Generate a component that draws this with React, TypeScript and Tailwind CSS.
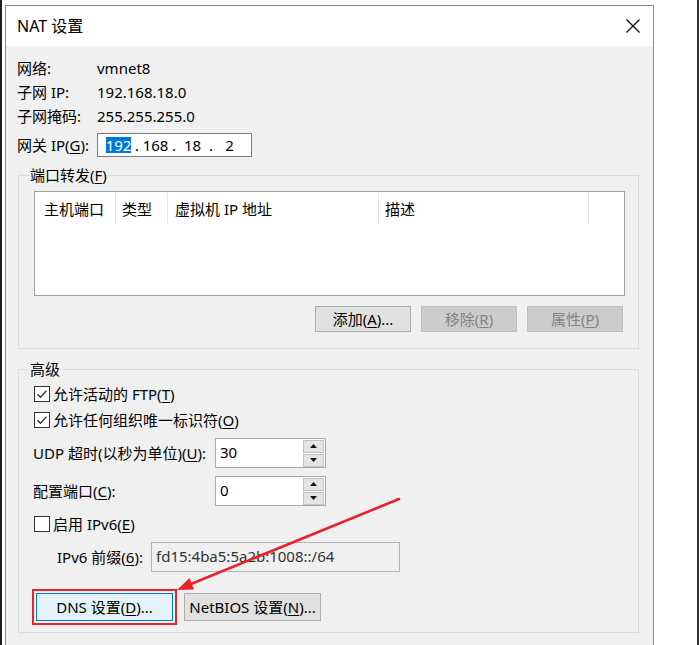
import React from "react";

const Mn = ({ c }: { c: string }) => (
  <>
    (<u className="underline-offset-2">{c}</u>)
  </>
);

function Check({ checked }: { checked: boolean }) {
  return (
    <span className="w-[16px] h-[16px] border border-[#333333] bg-white flex items-center justify-center shrink-0">
      {checked && (
        <svg width="12" height="12" viewBox="0 0 12 12">
          <path d="M1.5 6.2 L4.5 9.2 L10.5 2.6" fill="none" stroke="#333333" strokeWidth="1.4" />
        </svg>
      )}
    </span>
  );
}

function Spinner({ value }: { value: string }) {
  return (
    <div className="w-[111px] h-[30px] border border-[#a9a9a9] bg-white flex items-center">
      <span className="flex-1 pl-[4px] pb-[3px]">{value}</span>
      <div className="flex flex-col gap-[1px] mr-[1px]">
        <div className="w-[21px] h-[13px] bg-[#e4e4e4] border border-[#c4c4c4] flex items-center justify-center">
          <svg width="7" height="4" viewBox="0 0 7 4">
            <path d="M0 4 L3.5 0 L7 4 Z" fill="#111" />
          </svg>
        </div>
        <div className="w-[21px] h-[13px] bg-[#e4e4e4] border border-[#c4c4c4] flex items-center justify-center">
          <svg width="7" height="4" viewBox="0 0 7 4">
            <path d="M0 0 L7 0 L3.5 4 Z" fill="#111" />
          </svg>
        </div>
      </div>
    </div>
  );
}

export default function App() {
  return (
    <div className="relative w-[699px] h-[645px] bg-white overflow-hidden flex text-[15px] text-black font-['Noto_Sans','Noto_Sans_CJK_SC',sans-serif]">
      <div className="w-[2px] h-full bg-[#1e1e1e]" />
      <div className="w-[3px]" />

      {/* dialog */}
      <div className="mt-[5px] w-[649px] h-[700px] border border-[#8a8a8a] flex flex-col">
        <div className="h-[40px] bg-white flex items-center justify-between pl-[11px] pr-[13px]">
          <span className="text-[16px]">NAT 设置</span>
          <svg width="14" height="14" viewBox="0 0 14 14">
            <path d="M0.5 0.5 L13.5 13.5 M13.5 0.5 L0.5 13.5" stroke="#111" strokeWidth="1.3" />
          </svg>
        </div>

        <div className="flex-1 bg-[#f0f0f0] pl-[11px] pt-[10px] leading-[20px]">
          <div className="flex h-[24px] items-center">
            <span className="w-[80px]">网络:</span>
            <span>vmnet8</span>
          </div>
          <div className="flex h-[24px] items-center">
            <span className="w-[80px]">子网 IP:</span>
            <span>192.168.18.0</span>
          </div>
          <div className="flex h-[24px] items-center">
            <span className="w-[80px]">子网掩码:</span>
            <span>255.255.255.0</span>
          </div>
          <div className="flex h-[24px] items-center mt-[5px]">
            <span className="w-[80px]">
              网关 IP<Mn c="G" />:
            </span>
            <div className="w-[155px] h-[24px] border border-[#7a7a7a] bg-white flex items-center pl-[4px]">
              <span className="w-[33px] text-center">
                <span className="bg-[#0078d7] text-white leading-[16px] inline-block">192</span>
              </span>
              <span className="w-[4px] text-center">.</span>
              <span className="w-[33px] text-center">168</span>
              <span className="w-[4px] text-center">.</span>
              <span className="w-[33px] text-center">18</span>
              <span className="w-[4px] text-center">.</span>
              <span className="w-[33px] text-center">2</span>
            </div>
          </div>

          {/* port forwarding */}
          <fieldset className="ml-[1px] mt-[8px] w-[621px] border border-[#dcdcdc] pb-[16px]">
            <legend className="ml-[10px] px-[1px] leading-[20px]">
              端口转发<Mn c="F" />
            </legend>
            <div className="ml-[15px] mt-[6px] w-[591px] h-[105px] border border-[#a0a0a0] bg-white">
              <div className="flex h-[32px] items-center">
                <div className="w-[81px] h-[31px] border-r border-[#e5e5e5] pl-[9px] pt-[6px]">主机端口</div>
                <div className="w-[52px] h-[31px] border-r border-[#e5e5e5] pl-[6px] pt-[6px]">类型</div>
                <div className="w-[211px] h-[31px] border-r border-[#e5e5e5] pl-[7px] pt-[6px]">虚拟机 IP 地址</div>
                <div className="w-[210px] h-[31px] border-r border-[#e5e5e5] pl-[6px] pt-[6px]">描述</div>
              </div>
            </div>
            <div className="ml-[15px] w-[591px] mt-[10px] flex justify-end gap-[10px] pr-[2px]">
              <div className="w-[96px] h-[26px] bg-[#e1e1e1] border border-[#adadad] flex items-center justify-center">
                添加<Mn c="A" />...
              </div>
              <div className="w-[96px] h-[26px] bg-[#cccccc] border border-[#bfbfbf] text-[#838383] flex items-center justify-center">
                移除<Mn c="R" />
              </div>
              <div className="w-[96px] h-[26px] bg-[#cccccc] border border-[#bfbfbf] text-[#838383] flex items-center justify-center">
                属性<Mn c="P" />
              </div>
            </div>
          </fieldset>

          {/* advanced */}
          <fieldset className="ml-[1px] mt-[10px] w-[621px] border border-[#dcdcdc] pb-[7px]">
            <legend className="ml-[10px] px-[1px] leading-[20px]">高级</legend>
            <div className="ml-[15px] mt-[2px] h-[26px] flex items-center gap-[3px]">
              <Check checked />
              <span>
                允许活动的 FTP<Mn c="T" />
              </span>
            </div>
            <div className="ml-[15px] h-[26px] flex items-center gap-[3px]">
              <Check checked />
              <span>
                允许任何组织唯一标识符<Mn c="O" />
              </span>
            </div>
            <div className="mt-[5px] h-[30px] flex items-center">
              <span className="ml-[14px] w-[182px]">
                UDP 超时(以秒为单位)<Mn c="U" />:
              </span>
              <Spinner value="30" />
            </div>
            <div className="mt-[8px] h-[30px] flex items-center">
              <span className="ml-[14px] w-[182px]">
                配置端口<Mn c="C" />:
              </span>
              <Spinner value="0" />
            </div>
            <div className="ml-[15px] mt-[6px] h-[24px] flex items-center gap-[3px]">
              <Check checked={false} />
              <span>
                启用 IPv6<Mn c="E" />
              </span>
            </div>
            <div className="mt-[6px] h-[30px] flex items-center">
              <span className="ml-[38px] w-[94px]">
                IPv6 前缀<Mn c="6" />:
              </span>
              <div className="w-[249px] h-[30px] bg-[#f0f0f0] border border-[#b4b4b4] flex items-center pl-[4px] pb-[3px] text-[#333333]">
                fd15:4ba5:5a2b:1008::/64
              </div>
            </div>
            <div className="ml-[13px] mt-[17px] flex items-center gap-[7px]">
              <div className="border-2 border-[#e5252a] p-[2px]">
                <div className="w-[137px] h-[28px] bg-[#e5f1fb] border border-[#0078d7] flex items-center justify-center">
                  DNS 设置<Mn c="D" />...
                </div>
              </div>
              <div className="w-[137px] h-[28px] bg-[#e1e1e1] border border-[#adadad] flex items-center justify-center">
                NetBIOS 设置<Mn c="N" />...
              </div>
            </div>
          </fieldset>
        </div>
      </div>

      <div className="flex-1" />
      <div className="w-[2px] h-full bg-[#333333]" />

      {/* annotation arrow */}
      <svg className="absolute left-0 top-0 pointer-events-none" width="699" height="645">
        <line x1="399" y1="499" x2="191" y2="584" stroke="#e8222a" strokeWidth="2.6" strokeLinecap="round" />
        <polygon points="177,590 194,589.5 189.5,578" fill="#e8222a" />
      </svg>
    </div>
  );
}
